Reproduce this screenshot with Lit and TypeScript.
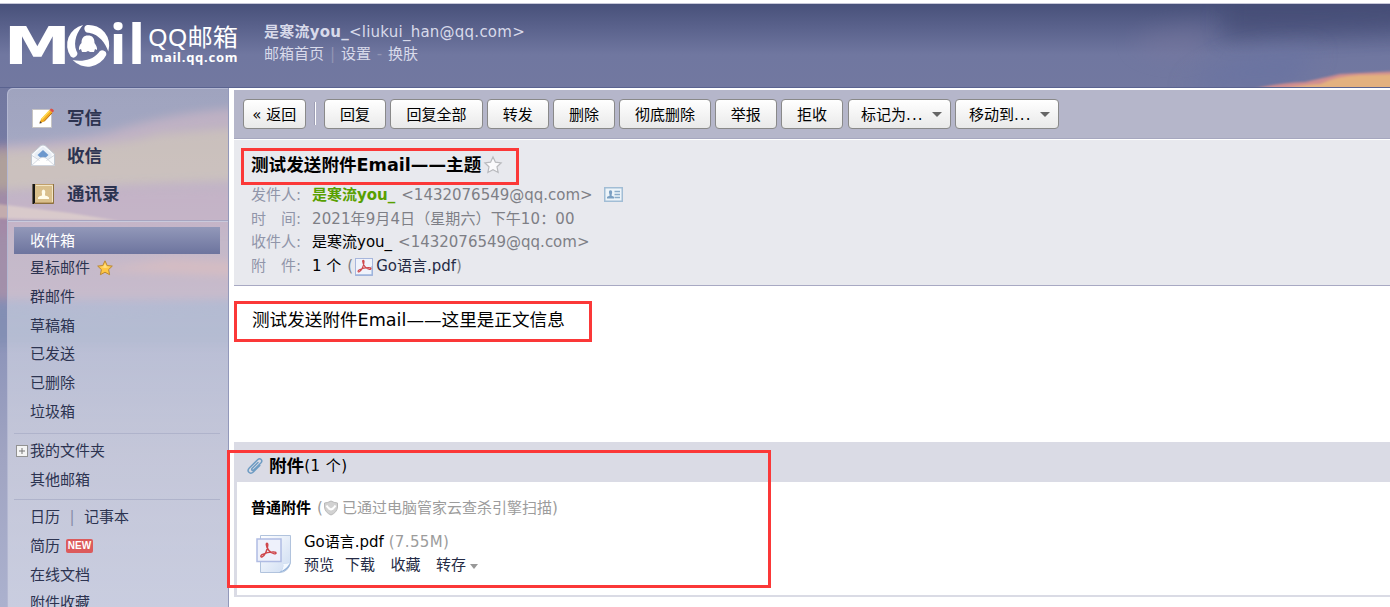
import { LitElement, html, css, svg } from "lit";
import { customElement } from "lit/decorators.js";

const sky = html`<svg class="sky" viewBox="0 0 1390 607" preserveAspectRatio="none" aria-hidden="true">
  <defs>
    <linearGradient id="base" x1="0" y1="0" x2="0" y2="1">
      <stop offset="0" stop-color="#454e77" />
      <stop offset=".045" stop-color="#5a628c" />
      <stop offset=".09" stop-color="#7077a0" />
      <stop offset=".15" stop-color="#7278a0" />
      <stop offset=".3" stop-color="#777da6" />
      <stop offset=".55" stop-color="#8b93b9" />
      <stop offset=".75" stop-color="#a0a4c2" />
      <stop offset="1" stop-color="#abb1ce" />
    </linearGradient>
    <filter id="soft" x="-40%" y="-80%" width="180%" height="260%"><feGaussianBlur stdDeviation="11" /></filter>
    <filter id="mist" x="-20%" y="-50%" width="140%" height="200%"><feGaussianBlur stdDeviation="5" /></filter>
    <filter id="fine" x="-20%" y="-50%" width="140%" height="200%"><feGaussianBlur stdDeviation="1.3" /></filter>
  </defs>
  <rect width="1390" height="607" fill="url(#base)" />
  <path d="M1225 0H1420V28C1330 36 1270 34 1225 38Z" fill="#3f466f" opacity=".55" filter="url(#soft)" />
  <path d="M1130 42Q1180 20 1215 28L1195 56Q1150 62 1130 42Z" fill="#7d799f" opacity=".4" filter="url(#soft)" />
  <path d="M1185 90Q1220 45 1320 50L1290 90Z" fill="#6872a2" opacity=".6" filter="url(#soft)" />
  <path d="M1250 90Q1275 83 1305 82Q1332 76 1340 74L1400 71V92H1250Z" fill="#cf8d90" filter="url(#fine)" />
  <path d="M1262 92Q1300 85 1320 84Q1336 76 1360 75L1400 74V92Z" fill="#e3b17f" filter="url(#fine)" />
  <path d="M-10 146Q80 140 110 132Q170 112 240 108V300H-10Z" fill="#ad91a8" opacity=".75" filter="url(#mist)" />
  <path d="M-10 152Q110 148 160 134L240 128V180L-10 190Z" fill="#b6a996" opacity=".7" filter="url(#mist)" />
  <path d="M-10 205Q120 180 240 190V230L-10 236Z" fill="#a687a7" opacity=".5" filter="url(#mist)" />
  <path d="M-10 203L70 213L120 221L-10 218Z" fill="#d5bfb2" opacity=".65" filter="url(#fine)" />
  <path d="M95 270L170 259L240 262V276Z" fill="#c69699" opacity=".7" filter="url(#mist)" />
  <path d="M-10 306L110 310L240 303V345H-10Z" fill="#818eb3" opacity=".75" filter="url(#mist)" />
</svg>`;

const blade = (angle: number) => svg`<path transform="rotate(${angle})"
  d="M-1 -20.500A20.500 20.500 0 0 1 20.300 6C17.500 -2 11.500 -11 1 -12.800A4 4 0 0 1 -1 -20.500Z" />`;

const logo = html`<svg class="logo" width="240" height="80" viewBox="0 4 240 80">
  <defs><linearGradient id="disc" x1="0" y1="0" x2="0" y2="1"><stop stop-color="#585f8a" /><stop offset=".8" stop-color="#7077a0" /></linearGradient></defs>
  <g fill="#fff">
    <text transform="translate(3.800 64) scale(1.3 1)" font-family="DejaVu Sans" font-weight="700" font-size="52">M</text>
    <text x="109.500" y="64" font-family="Open Sans" font-weight="700" font-size="56">i</text>
    <text x="128" y="64" font-family="Open Sans" font-weight="700" font-size="56">l</text>
    <circle cx="88" cy="45.500" r="23" fill="url(#disc)" />
    <g transform="translate(88 45.500)">${blade(0)}${blade(120)}${blade(240)}</g>
    <path d="M88 35.500C92.500 35.500 94.500 38 94.500 43Q97.500 47 97 50L95 49L94 52H90L88 51L86 52H82L81 49L79 50Q78.500 46 81.500 43C81.500 38 83.500 35.500 88 35.500Z" />
    <text x="148" y="45.500" font-family="Noto Sans, Noto Sans CJK SC, sans-serif" font-size="24" textLength="90" lengthAdjust="spacingAndGlyphs">QQ邮箱</text>
    <text x="150.500" y="61.500" font-family="Noto Sans, sans-serif" font-weight="700" font-size="13" textLength="87">mail.qq.com</text>
  </g>
</svg>`;

const iconWrite = html`<svg width="24" height="24" viewBox="0 0 24 24">
  <path d="M1.500 3.500H20.500V21.500H1.500Z" fill="#fff" stroke="#c7c5c4" />
  <path d="M8.500 17.500L10 13L18.500 4L21.500 6.500L13 15.500Z" fill="#f3ad20" />
  <path d="M10.500 13.500L18.500 5" stroke="#ffdc58" stroke-width="1.500" />
  <path d="M13 15.500L21 7" stroke="#b86b0c" />
  <path d="M18.500 4L20 2.500Q22.500 2.500 23 5L21.500 6.500Z" fill="#dc5045" />
  <path d="M8.500 17.500L9 15L11 17Z" fill="#4d3c34" />
</svg>`;

const iconInbox = html`<svg width="24" height="24" viewBox="0 0 24 24">
  <path d="M.5 10L10 1.500Q12 .5 14 1.500L23.500 10V21.500H.5Z" fill="#f8fafc" stroke="#c0c7d0" />
  <path d="M3.500 9.500L12 2.500L20.500 9.500V13L12 19L3.500 13Z" fill="#e8eef5" />
  <path d="M12 6L17.500 11L12 16L6.500 11Z" fill="#6d98cd" />
  <path d="M.5 21.500L9 14Q12 12.500 15 14L23.500 21.500Z" fill="#fff" stroke="#cbd1d9" stroke-width=".8" />
  <path d="M1 11.500L8.500 16.500M23 11.500L15.500 16.500" stroke="#d3d8df" />
</svg>`;

const iconContacts = html`<svg width="24" height="24" viewBox="0 0 24 24">
  <rect x="1.500" y="2" width="21" height="20" fill="#c0a06b" />
  <path d="M1.500 2H4V22H1.500Z" fill="#171717" />
  <path d="M4 3H22V20H4Z" fill="#d9bf8c" />
  <path d="M5 3.500H21.500V20" fill="none" stroke="#f3e6c5" />
  <path d="M22.500 2V21.500H3" fill="none" stroke="#8d7141" />
  <path d="M7 17V15.500Q8 14 11 13.500V12Q10 8 12.500 7.500Q15 8 14 12V13.500Q17 14 18 15.500V17Z" fill="#fffbe9" />
</svg>`;

const starPath = "M8 .8L10.200 5.500L15.300 6.100L11.600 9.600L12.600 14.700L8 12.200L3.400 14.700L4.400 9.600L.7 6.100L5.800 5.500Z";

const iconStar = html`<svg width="16" height="16" viewBox="0 0 16 16">
  <path d=${starPath} fill="#ffc744" stroke="#b98835" stroke-linejoin="round" />
  <path d="M8 3.500L9.500 6.500L13 7L8 8L3.500 7L6.500 6.500Z" fill="#ffe081" />
</svg>`;

const iconStarOff = html`<svg width="20" height="20" viewBox="-1 -1 18 18">
  <path d=${starPath} fill="#fafafc" stroke="#b8b9bd" stroke-width="1.100" />
</svg>`;

const iconCard = html`<svg width="19" height="15" viewBox="0 0 19 15">
  <rect x=".75" y=".75" width="17.500" height="13.500" fill="#edf4f9" stroke="#a1bdd5" stroke-width="1.500" />
  <path d="M3 11.500V10Q4 9 5.500 9V7.500Q4 3.500 6.500 3.300Q9 3.500 7.700 7.500V9Q9.500 9 10 10V11.500Z" fill="#7a9fc2" />
  <path d="M10.500 4.500H16M10.500 7.500H16M10.500 10.500H16" stroke="#8bacc9" stroke-width="1.300" />
</svg>`;

const acrobat = svg`<path d="M4 14C6 13.500 9 8 9 3.500C9 2 7.500 2 7.700 3.500C8 7 11 10.800 14.500 11.300C16.500 11.500 16.500 9.700 14.500 9.700C11 9.500 7 10.500 4 12C2.500 13 3 14.200 4 14Z" fill="none" stroke="#cf474b" stroke-width="1.200" />`;

const iconPdfSmall = html`<svg class="pdf-small" width="18" height="18" viewBox="0 0 18 18">
  <rect x=".5" y=".5" width="17" height="17" fill="#f0f3fb" stroke="#a7b6dc" />
  <path d="M1 16.800H17V8" fill="none" stroke="#93b0db" />
  ${acrobat}
</svg>`;

const iconPdfLarge = html`<svg width="36" height="40" viewBox="0 0 36 40">
  <defs><linearGradient id="sheet" x1="0" y1="0" x2="1" y2="1"><stop stop-color="#fff" /><stop offset="1" stop-color="#cddcf2" /></linearGradient></defs>
  <path d="M4.500 1.500H34.500V29Q32 38 24 38.500H4.500Z" fill="url(#sheet)" stroke="#b1c3dd" />
  <path d="M34.500 28Q32 30 27 29.500Q28 36 23 38.500Q33 37 34.500 28Z" fill="#8fafd8" />
  <path d="M27 29.500Q32 30 34.500 28Q30 36 25 37Q28 34 27 29.500Z" fill="#f4f9ff" />
  <rect x="1" y="5" width="24" height="22.500" fill="#eef1fb" stroke="#b0bce3" stroke-width="1.500" />
  <g transform="translate(1.200 6.500) scale(1.180)">${acrobat}</g>
</svg>`;

const iconClip = html`<svg width="18" height="18" viewBox="0 0 18 18" fill="none" stroke="#6e9cc3" stroke-width="1.500" stroke-linecap="round">
  <path d="M12 5.500L6.200 11.300C5 12.800 6.500 14 7.800 12.900L14.800 6C17.300 3.300 14.300 .4 11.600 2.800L3.300 11C.3 14.200 4 18 7.300 15L13.800 8.500" />
</svg>`;

const iconShield = html`<svg width="16" height="16" viewBox="0 0 16 16">
  <path d="M8 1Q11 2.800 14.500 3V7Q14 12.500 8 15Q2 12.500 1.500 7V3Q5 2.800 8 1Z" fill="#d2d2d2" stroke="#b9b9b9" />
  <path d="M3.500 5.500Q5.500 9 8 9.500Q10.500 9 12.500 5.500" fill="none" stroke="#fff" stroke-width="2" />
</svg>`;

@customElement("app-root")
export class AppRoot extends LitElement {
  static styles = css`
    :host {
      display: block;
      position: relative;
      height: 607px;
      overflow: hidden;
      background: #fff;
      font: 15px/20px "DejaVu Sans", "Noto Sans CJK SC", sans-serif;
      color: #000;
      white-space: nowrap;
    }
    svg { display: block; flex: none; }
    .sky { position: absolute; inset: 0; width: 100%; height: 100%; }
    .page { position: relative; display: grid; grid-template: 88px 519px / 229px 1fr; }
    .header {
      grid-column: 1 / 3;
      display: flex;
      border-top: 3px solid #fff;
      border-bottom: 1px solid #5a6390;
      box-shadow: inset 0 1px #c7c8d9;
      padding-top: 1px;
      box-sizing: border-box;
      color: #d8daea;
    }
    .account { margin-left: 24px; padding-top: 17px; line-height: 22px; }
    .mail { letter-spacing: .24px; }
    .links { display: flex; }
    .links i { font-style: normal; color: #9296b4; width: 17px; text-align: center; }

    .side {
      margin-left: 7px;
      border-left: 1px solid #b4b8d2;
      border-right: 1px solid #9298ba;
      border-radius: 6px 0 0 0;
      background: linear-gradient(#ffffff52, #ffffff66 45%, #ffffff5c);
      box-sizing: border-box;
      height: 519px;
      overflow: hidden;
      color: #2c3350;
      box-shadow: inset 0 1px #b4b8d2;
    }
    .main-links { padding: 11px 0 0 23px; height: 132px; box-sizing: border-box; }
    .main-link { display: flex; align-items: center; gap: 12px; height: 38px; font-size: 17.5px; font-weight: 700; }
    .rule { height: 1px; background: #c9c9dc; border-top: 1px solid #a7a5c0; }
    .thin { height: 1px; background: #afb3cb; margin: 0 8px 0 6px; }
    .folders { padding: 5px 8px 0 6px; height: 211px; box-sizing: border-box; }
    .folder { display: flex; align-items: center; height: 28.7px; padding-left: 16px; box-sizing: border-box; gap: 7px; }
    .folder.active { color: #fff; background: linear-gradient(#9298b9, #6d749e); height: 27px; }
    .group { padding: 3px 7px 0 6px; height: 65px; box-sizing: border-box; }
    .plus { margin: 0 -5px 0 -14px; }
    .bar { color: #898ea9; width: 10px; text-align: center; }
    .new {
      font: 700 10px/14px "Liberation Sans", sans-serif;
      color: #fff; background: #dc5a5b; border-radius: 2px; width: 27px; text-align: center; margin-left: -1px;
    }

    .main { background: #fff; padding: 2px 0 0 5px; }
    .toolbar {
      height: 49px; box-sizing: border-box; background: #b5b6ca; border-bottom: 1px solid #a6a7bf;
      padding: 9px 0 0 9px; display: flex; gap: 3.6px;
    }
    .btn {
      height: 30px; box-sizing: border-box; border: 1px solid #898989; border-radius: 4px;
      background: linear-gradient(#fff, #e9e9e9); display: flex; align-items: center; justify-content: center;
      padding-top: 1px;
    }
    .w1 { width: 62.6px; } .w2 { width: 93px; } .w3 { width: 92px; }
    .w4 { width: 103.8px; justify-content: flex-start; padding-left: 12.5px; margin-left: .6px; }
    .dots { letter-spacing: 1.1px; width: 25.5px; }
    .split { width: 1px; height: 23px; margin: 3px 4px 0 5px; background: #fff; border-left: 1px solid #9d9eb4; }
    .caret { border: 5px solid transparent; border-top-color: #666; border-bottom: 0; }

    .info { margin-top: 1px; height: 146px; box-sizing: border-box; background: #e8e9ee; border-bottom: 1px solid #a8a9c3; padding: 13px 0 0 17px; color: #7e7f86; }
    .subject { display: flex; align-items: center; height: 24px; font-size: 17.6px; font-weight: 700; color: #000; margin-bottom: 6px; gap: 2px; }
    .field { display: flex; align-items: center; height: 23.7px; }
    .label { width: 61px; color: #9095a9; }
    .gap { display: inline-block; width: 15px; }
    .time { letter-spacing: .1px; }
    .name { color: #000; margin-right: 6px; }
    .sender { color: #58a000; font-weight: 700; }
    .card { margin-left: 11px; }
    .dark { color: #252b45; }
    .pdf-small { margin: 2px 3.5px 0 1.5px; }

    .body { height: 156px; box-sizing: border-box; padding: 22px 0 0 18px; font-size: 17.6px; line-height: 24px; }
    .attach { border: 3px solid #dadbe5; border-width: 0 0 2px 3px; height: 155px; box-sizing: border-box; }
    .attach-head { height: 40px; background: #dadbe5; display: flex; align-items: center; padding: 7px 0 0 9px; box-sizing: border-box; }
    .attach-head b { font-size: 17.6px; margin-left: 5px; }
    .attach-head span { letter-spacing: .5px; }
    .scan { display: flex; align-items: center; margin: 16px 0 0 14px; color: #9c9c9c; }
    .scan b { color: #000; margin-right: 6px; }
    .scan svg { margin-right: 3px; }
    .file { display: flex; margin: 13px 0 0 19px; gap: 12px; }
    .file svg { margin-top: 3px; }
    .file-text { line-height: 23.5px; }
    .size { color: #9c9c9c; letter-spacing: .35px; }
    .ops { display: flex; align-items: center; color: #252b45; margin-top: -1px; }
    .ops span { margin-right: 11px; }
    .ops span + span { margin-right: 15.5px; }
    .ops span.last { margin-right: 4px; }
    .ops .caret { border-top-color: #989898; border-width: 5px 4.5px 0; margin-top: 3px; }

    .mark { position: absolute; border: 3px solid #fb3838; box-sizing: border-box; }
    .mark-subject { left: 241px; top: 148px; width: 278px; height: 37px; }
    .mark-body { left: 234px; top: 301px; width: 358px; height: 41px; }
    .mark-files { left: 227px; top: 450px; width: 544px; height: 138px; }
  `;

  private folders = ["群邮件", "草稿箱", "已发送", "已删除", "垃圾箱"];
  private actions = [
    ["回复", "w1"], ["回复全部", "w2"], ["转发", "w1"], ["删除", "w1"],
    ["彻底删除", "w3"], ["举报", "w1"], ["拒收", "w1"],
  ];

  render() {
    return html`
      ${sky}
      <div class="page">
        <header class="header">
          ${logo}
          <div class="account">
            <div class="mail"><b>是寒流you_</b>&lt;liukui_han@qq.com&gt;</div>
            <div class="links">邮箱首页<i>|</i>设置<i>-</i>换肤</div>
          </div>
        </header>
        <nav class="side">
          <div class="main-links">
            <div class="main-link">${iconWrite}写信</div>
            <div class="main-link">${iconInbox}收信</div>
            <div class="main-link">${iconContacts}通讯录</div>
          </div>
          <div class="rule"></div>
          <div class="folders">
            <div class="folder active">收件箱</div>
            <div class="folder">星标邮件${iconStar}</div>
            ${this.folders.map((name) => html`<div class="folder">${name}</div>`)}
          </div>
          <div class="thin"></div>
          <div class="group">
            <div class="folder">
              <svg class="plus" width="12" height="12" viewBox="0 0 12 12"><rect x=".5" y=".5" width="11" height="11" fill="#f4f4f4" stroke="#929292" /><path d="M3 6H9M6 3V9" stroke="#777" /></svg>我的文件夹
            </div>
            <div class="folder">其他邮箱</div>
          </div>
          <div class="thin"></div>
          <div class="group">
            <div class="folder">日历<span class="bar">|</span>记事本</div>
            <div class="folder">简历<span class="new">NEW</span></div>
            <div class="folder">在线文档</div>
            <div class="folder">附件收藏</div>
          </div>
        </nav>
        <main class="main">
          <div class="toolbar">
            <div class="btn w1">« 返回</div>
            <div class="split"></div>
            ${this.actions.map(([name, width]) => html`<div class="btn ${width}">${name}</div>`)}
            <div class="btn w4">标记为<span class="dots">...</span><span class="caret"></span></div>
            <div class="btn w4">移动到<span class="dots">...</span><span class="caret"></span></div>
          </div>
          <section class="info">
            <div class="subject">测试发送附件Email——主题${iconStarOff}</div>
            <div class="field"><span class="label">发件人:</span><span class="name sender">是寒流you_</span>&lt;1432076549@qq.com&gt;<span class="card">${iconCard}</span></div>
            <div class="field"><span class="label">时<span class="gap"></span>间:</span><span class="time">2021年9月4日（星期六）下午10：00</span></div>
            <div class="field"><span class="label">收件人:</span><span class="name">是寒流you_</span>&lt;1432076549@qq.com&gt;</div>
            <div class="field"><span class="label">附<span class="gap"></span>件:</span><span class="name">1 个</span>(${iconPdfSmall}<span class="dark">Go语言.pdf</span>)</div>
          </section>
          <div class="body">测试发送附件Email——这里是正文信息</div>
          <section class="attach">
            <div class="attach-head">${iconClip}<b>附件</b><span>(1 个)</span></div>
            <div class="scan"><b>普通附件</b>(${iconShield}已通过电脑管家云查杀引擎扫描)</div>
            <div class="file">
              ${iconPdfLarge}
              <div class="file-text">
                <div>Go语言.pdf <span class="size">(7.55M)</span></div>
                <div class="ops"><span>预览</span><span>下载</span><span>收藏</span><span class="last">转存</span><i class="caret"></i></div>
              </div>
            </div>
          </section>
        </main>
      </div>
      <div class="mark mark-subject"></div>
      <div class="mark mark-body"></div>
      <div class="mark mark-files"></div>
    `;
  }
}
